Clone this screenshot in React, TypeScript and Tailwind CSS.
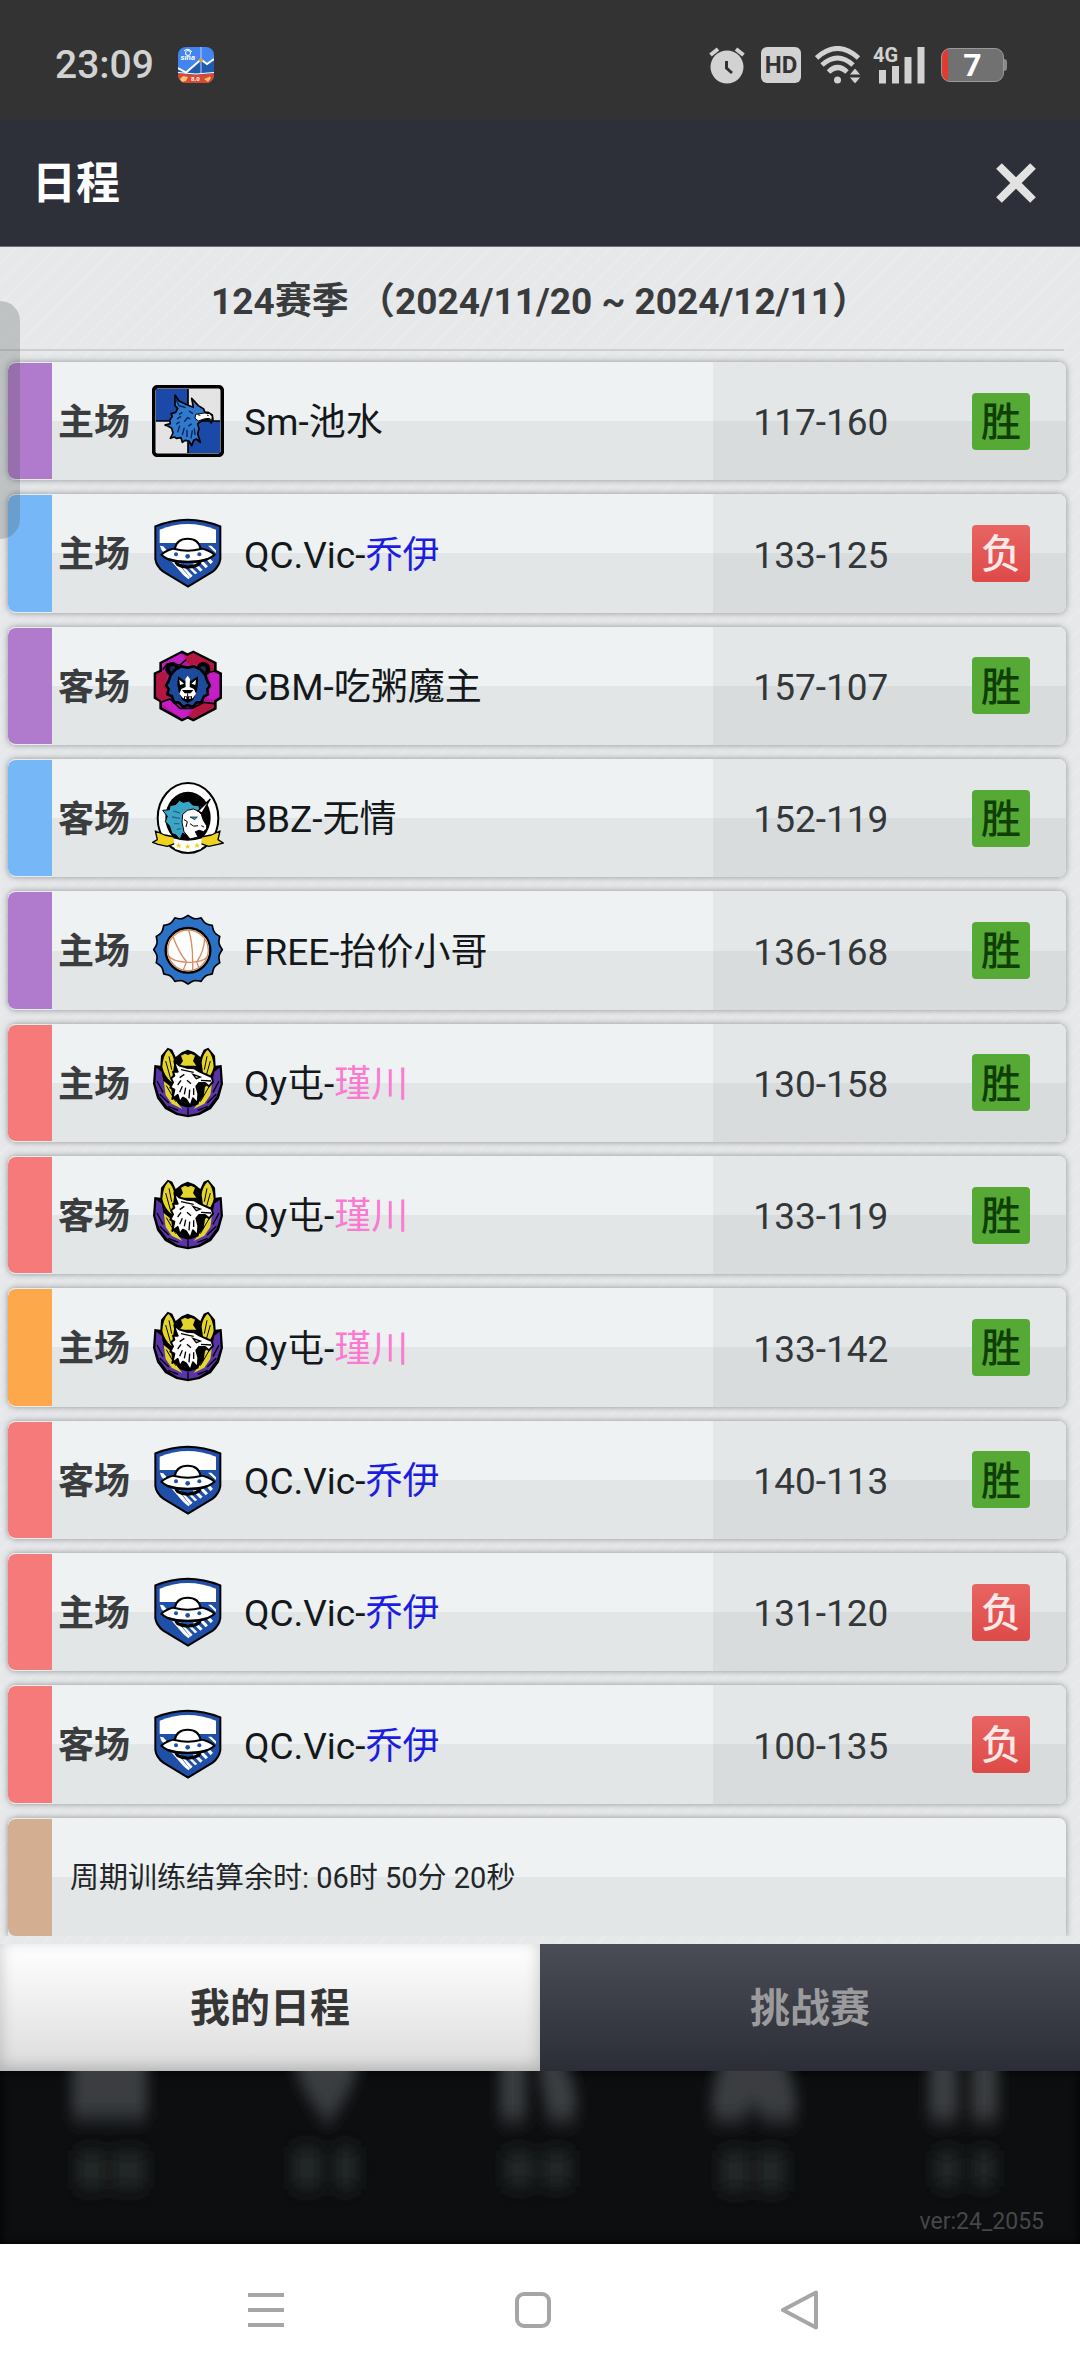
import { useState } from 'react';
import type { ReactNode } from 'react';
import clsx from 'clsx';

type Logo = 'griffin' | 'ufo' | 'bear' | 'unicorn' | 'ball' | 'eagle';
type Strip = 'purple' | 'blue' | 'red' | 'orange';

type Match = {
  strip: Strip;
  place: '主场' | '客场';
  logo: Logo;
  club: string;
  player: string;
  score: string;
  win: boolean;
};

const matches: Match[] = [
  { strip: 'purple', place: '主场', logo: 'griffin', club: 'Sm', player: '池水', score: '117-160', win: true },
  { strip: 'blue', place: '主场', logo: 'ufo', club: 'QC.Vic', player: '乔伊', score: '133-125', win: false },
  { strip: 'purple', place: '客场', logo: 'bear', club: 'CBM', player: '吃粥魔主', score: '157-107', win: true },
  { strip: 'blue', place: '客场', logo: 'unicorn', club: 'BBZ', player: '无情', score: '152-119', win: true },
  { strip: 'purple', place: '主场', logo: 'ball', club: 'FREE', player: '抬价小哥', score: '136-168', win: true },
  { strip: 'red', place: '主场', logo: 'eagle', club: 'Qy屯', player: '瑾川', score: '130-158', win: true },
  { strip: 'red', place: '客场', logo: 'eagle', club: 'Qy屯', player: '瑾川', score: '133-119', win: true },
  { strip: 'orange', place: '主场', logo: 'eagle', club: 'Qy屯', player: '瑾川', score: '133-142', win: true },
  { strip: 'red', place: '客场', logo: 'ufo', club: 'QC.Vic', player: '乔伊', score: '140-113', win: true },
  { strip: 'red', place: '主场', logo: 'ufo', club: 'QC.Vic', player: '乔伊', score: '131-120', win: false },
  { strip: 'red', place: '客场', logo: 'ufo', club: 'QC.Vic', player: '乔伊', score: '100-135', win: false },
];

const stripColors: Record<Strip, string> = {
  purple: 'bg-[#b07acd]',
  blue: 'bg-[#76b8f7]',
  red: 'bg-[#f67a7a]',
  orange: 'bg-[#fda84a]',
};

const playerColors: Record<Logo, string> = {
  griffin: 'text-[#14181b]',
  ufo: 'text-[#1d1de0]',
  bear: 'text-[#14181b]',
  unicorn: 'text-[#14181b]',
  ball: 'text-[#14181b]',
  eagle: 'text-[#fb7bd0]',
};

/* ---------- Club logos ---------- */

function GriffinLogo() {
  return (
    <svg viewBox="21 30 216 216" className="size-[72px]">
      <rect x="27" y="36" width="204" height="204" rx="12" fill="#e4e4e4" />
      <path d="M33 42H129V138H33zM129 138H225V234H129z" fill="#1a49a8" />
      <path d="M129 42V138M33 138H225M129 138V234" stroke="#000" strokeWidth="5" />
      <path
        d="M90 60 102 78 122 88 145 97 140 70 160 92 176 102 180 112 190 112 202 120 204 134 198 144 194 136 182 134 170 138 158 146 162 162 158 176 166 202 154 192 146 196 140 212 132 198 120 196 112 202 108 188 94 190 88 186 76 190 84 174 80 160 70 154 60 150 76 146 74 136 82 124 78 116 92 112 98 100 90 92z"
        fill="#2f79cf"
        stroke="#000"
        strokeWidth="5"
        strokeLinejoin="round"
      />
      <path d="M152 118 178 114 194 116 201 124 201 136 192 130 176 132 160 138 150 130z" fill="#fff" stroke="#000" strokeWidth="3" />
      <path d="M158 119 166 121M186 120 191 122" stroke="#000" strokeWidth="3" />
      <path
        d="M92 70 102 92 122 98M102 118 112 112M96 132 108 124M94 148 104 140 M98 172 104 152 M112 180 118 158M126 186V164 M138 190 142 166M150 180 148 160M118 140 128 128 136 132M132 108 144 116M130 154 140 146"
        stroke="#0c1f4a"
        strokeWidth="4"
        fill="none"
      />
      <rect x="26" y="35" width="206" height="206" rx="12" fill="none" stroke="#000" strokeWidth="11" />
    </svg>
  );
}

function UfoLogo() {
  return (
    <svg viewBox="36 52 216 216" className="size-[72px]">
      <path d="M46 80Q95 60 143 60T241 80V178Q238 200 218 216L144 261 70 216Q49 200 46 178z" fill="#1f4fa6" stroke="#000" strokeWidth="6" />
      <path d="M59 90Q100 73 143 73T228 90V130H59z" fill="#fff" />
      <path
        d="M60 138 70 140 150 234 145 239 130 226 64 150zM114 188 123 192 158 228 151 234zM138 196 147 196 172 220 165 224zM158 192 167 190 188 210 181 216zM176 184 185 180 204 200 197 206zM196 176 205 172 219 186 212 194zM204 138 214 138 228 152V160z"
        fill="#fff"
      />
      <path d="M106 188Q143 212 182 188L176 196Q143 212 112 196z" fill="#d8d8d8" stroke="#000" strokeWidth="6" />
      <path d="M64 165Q80 150 108 146H178Q206 150 224 165 206 180 178 186H108Q80 180 64 165z" fill="#fff" stroke="#000" strokeWidth="6" strokeLinejoin="round" />
      <path d="M104 148Q110 117 143 117T182 148Q143 158 104 148z" fill="#fff" stroke="#000" strokeWidth="6" />
      <path d="M84 178Q143 196 204 178" stroke="#000" strokeWidth="6" fill="none" />
      <g fill="#1f4fa6">
        <circle cx="108" cy="164" r="6" />
        <circle cx="143" cy="170" r="7" />
        <circle cx="178" cy="164" r="6" />
      </g>
    </svg>
  );
}

function BearLogo() {
  return (
    <svg viewBox="66 89 216 216" className="size-[72px]">
      <path d="M156 95 173 103 190 95 256 128V152L272 160V232L256 242V264L190 299 173 291 156 299 92 264V242L75 232V160L92 152V128z" fill="#b5179e" stroke="#000" strokeWidth="8" />
      <path d="M173 106 190 98 252 130V152L226 160 214 130 180 134 162 118z" fill="#b3173f" />
      <path d="M95 154 112 160 108 200 118 232 96 244 79 230V162z" fill="#b3173f" />
      <path d="M222 246 252 250V262L190 295 176 288 190 270 186 260z" fill="#b3173f" />
      <path d="M95 130 154 99 168 118 150 134 112 128 98 148z" fill="#c41fc4" />
      <path d="M238 158 268 162V230L250 240 232 232 240 200z" fill="#c41fc4" />
      <path d="M95 250 120 238 150 262 184 266 170 290 156 295z" fill="#c41fc4" />
      <path d="M98 148 112 130 150 134 168 118M252 152 232 158M96 244 120 236 150 264 186 264 222 246 252 250" stroke="#000" strokeWidth="5" fill="none" />
      <circle cx="127" cy="146" r="21" fill="#000" />
      <circle cx="220" cy="146" r="21" fill="#000" />
      <circle cx="128" cy="146" r="9" fill="#1d2a55" />
      <circle cx="219" cy="146" r="9" fill="#1d2a55" />
      <path
        d="M136 148 154 138 173 142 192 138 212 148 226 164 232 182 240 196 232 206 234 222 222 228 214 246 200 246 188 260 173 254 160 260 146 246 132 246 126 228 112 222 116 206 108 196 116 182 122 164z"
        fill="#1c4a9c"
        stroke="#000"
        strokeWidth="8"
        strokeLinejoin="round"
      />
      <path d="M144 168 164 182 173 172 182 182 204 168 204 192 200 214 190 238 173 248 156 238 146 214 142 192z" fill="#000" />
      <path d="M166 176 173 166 180 176 179 200 192 206 198 220 188 234H159L148 220 154 206 167 200z" fill="#fff" />
      <path d="M148 178 162 190 150 194zM198 178 184 190 196 194z" fill="#fff" />
      <path d="M156 209H190L182 219H164zM162 228H186V236L173 243 162 236z" fill="#000" />
      <path d="M173 219V228" stroke="#000" strokeWidth="3" />
      <path d="M167 229V236M180 229V236" stroke="#fff" strokeWidth="4" />
    </svg>
  );
}

function UnicornLogo() {
  return (
    <svg viewBox="66 487 216 216" className="size-[72px]">
      <ellipse cx="174" cy="595" rx="91" ry="105" fill="#fff" stroke="#000" strokeWidth="6" />
      <ellipse cx="174" cy="594" rx="68" ry="78" fill="#000" />
      <path
        d="M98 572 118 570 120 558 138 554 148 542 160 548 176 544 188 556 206 558 212 574 204 584 190 582 176 600 166 612 164 630 174 650 158 640 150 660 138 646 126 642 118 618 106 606 112 590z"
        fill="#3aa5c4"
        stroke="#000"
        strokeWidth="3"
      />
      <path d="M158 584 172 572 190 568 204 574 214 584 220 602 230 618 230 628 220 636 208 632 196 636 204 652 180 658 162 636 156 608z" fill="#fff" stroke="#000" strokeWidth="3" />
      <path d="M204 574 241 538 216 580z" fill="#fff" stroke="#000" strokeWidth="4" />
      <path d="M180 592 202 592 194 600z" fill="#3aa5c4" stroke="#000" strokeWidth="2" />
      <path d="M162 600 172 606 168 622M214 618 222 622M180 612Q190 624 204 618" stroke="#000" strokeWidth="3" fill="none" />
      <path d="M130 574 150 580M126 592 150 596M132 612 148 612M140 630 152 626" stroke="#1b6f8c" strokeWidth="4" />
      <path d="M68 668 82 660 76 634 104 646 134 652V672L112 680 84 674z" fill="#eed21f" stroke="#000" strokeWidth="4" strokeLinejoin="round" />
      <path d="M280 670 264 660 270 634 244 646 212 652V672L236 680 264 674z" fill="#eed21f" stroke="#000" strokeWidth="4" strokeLinejoin="round" />
      <path d="M130 654Q173 668 216 654L213 688Q173 700 135 688z" fill="#fff" />
      <path d="M130 654Q173 668 216 654" stroke="#000" strokeWidth="4" fill="none" />
      <g fill="#eed21f">
        <path d="M146 669 149 675H155L150 679 152 685 146 681 140 685 142 679 137 675H143z" />
        <path d="M173 672 176 678H182L177 682 179 688 173 684 167 688 169 682 164 678H170z" />
        <path d="M201 669 204 675H210L205 679 207 685 201 681 195 685 197 679 192 675H198z" />
      </g>
    </svg>
  );
}

// Wavy cog outline around the basketball
const cogPath =
  Array.from({ length: 128 }, (_, i) => {
    const angle = (i / 128) * Math.PI * 2;
    const tip = 1 - Math.abs(Math.sin(angle * 8));
    const r = 95 + 8 * tip;
    return `${i === 0 ? 'M' : 'L'}${(174 + r * Math.cos(angle)).toFixed(1)} ${(211 + r * Math.sin(angle)).toFixed(1)}`;
  }).join('') + 'Z';

function BallLogo() {
  return (
    <svg viewBox="66 104 216 216" className="size-[72px]">
      <path d={cogPath} fill="#2b72c6" stroke="#000" strokeWidth="5" strokeLinejoin="round" />
      <circle cx="174" cy="213" r="67" fill="#fff" stroke="#000" strokeWidth="7" />
      <g fill="none" stroke="#d98b62" strokeWidth="4">
        <circle cx="174" cy="213" r="61" />
        <path d="M176 152Q188 190 188 246V273M130 174Q144 216 170 248M224 178Q222 216 200 248M116 230Q130 248 174 249T232 232M168 250 160 272M200 248 206 264" />
      </g>
    </svg>
  );
}

function EagleLogo() {
  return (
    <svg viewBox="21 36 216 216" className="size-[72px]">
      <path d="M28 90 46 92 48 62 68 38 82 44 92 66 110 52 128 44 148 52 166 66 176 44 190 38 210 62 212 92 230 90 234 146 222 190 198 222 164 240 129 247 94 240 60 222 36 190 24 146z" fill="#000" />
      {/* Purple laurel */}
      <path d="M34 98 50 110 58 152 76 186 102 210 129 218 156 210 182 186 200 152 208 110 224 98 227 146 215 184 192 214 160 234 129 240 98 234 66 214 43 184 31 146z" fill="#5a35a8" />
      <path d="M36 138 54 172M44 178 72 204M70 214 100 226M222 138 204 172M214 178 186 204M188 214 158 226M129 240V220" stroke="#000" strokeWidth="4" fill="none" />
      {/* Gold leaves */}
      <path d="M70 44Q86 58 88 84L80 142Q58 124 52 96 54 60 70 44zM188 44Q172 58 170 84L178 142Q200 124 206 96 204 60 188 44z" fill="#e4d52c" />
      <path d="M56 138 78 156 82 184 112 222 80 206 62 180zM202 138 180 156 176 184 146 222 178 206 196 180z" fill="#e4d52c" />
      <path d="M108 62 120 56 129 60 138 56 150 62 144 78 154 92H104L114 78z" fill="#e4d52c" />
      <path d="M62 78 76 128M72 64 80 104M196 78 182 128M186 64 178 104M64 152 92 200M194 152 166 200" stroke="#000" strokeWidth="3" fill="none" />
      {/* Eagle head */}
      <path
        d="M88 78 104 92 124 98 148 100 164 110 182 118 200 126 204 140 192 154 180 144 162 144 154 154 160 176 158 206 144 190 136 214 124 194 114 188 104 202 98 180 82 192 88 164 76 158 84 142 78 130 88 122 84 110 98 110 92 96z"
        fill="#fff"
        stroke="#000"
        strokeWidth="6"
        strokeLinejoin="round"
      />
      <path
        d="M144 118 166 126 154 131zM168 136 198 138M104 128 118 118M98 150 108 136M104 172 112 154M118 178 122 158M132 190 134 164M146 180 146 160M108 104 146 112M126 136 138 146"
        stroke="#000"
        strokeWidth="4"
        fill="none"
      />
    </svg>
  );
}

const logos: Record<Logo, ReactNode> = {
  griffin: <GriffinLogo />,
  ufo: <UfoLogo />,
  bear: <BearLogo />,
  unicorn: <UnicornLogo />,
  ball: <BallLogo />,
  eagle: <EagleLogo />,
};

/* ---------- Status bar ---------- */

function StatusBar() {
  return (
    <div className="flex h-[120px] items-center bg-[#333333] pr-[73px] pl-[55px] pt-2.5 text-[#d2d2d2]">
      <span className="text-[39px] font-medium">23:09</span>

      <svg viewBox="0 0 36 36" className="ml-6 size-9">
        <defs>
          <clipPath id="app-shape">
            <rect width="36" height="36" rx="8" />
          </clipPath>
        </defs>
        <g clipPath="url(#app-shape)">
          <rect width="36" height="36" fill="#4285f0" />
          <path d="M0 22 8 26 22 13 29 18 36 13V36H0z" fill="#1f5cae" />
          <path d="M23 0V26" stroke="#b9cff0" strokeWidth="1" />
          <path d="M0 21 8 25.500 23 12.500 29 17 36 12" stroke="#fff" strokeWidth="2" fill="none" />
          <path d="M0 26Q18 29 36 26V36H0z" fill="#d9482f" />
          <path d="M0 25.500Q18 28.500 36 25.500" stroke="#fff" strokeWidth="1" fill="none" />
          <circle cx="23" cy="13" r="2" fill="#e39a3a" />
          <circle cx="10" cy="6" r="2.500" fill="none" stroke="#fff" strokeWidth="1" />
          <path d="M6 4Q10 0 14 5" stroke="#fff" strokeWidth="1" fill="none" />
          <text x="2.500" y="13" fontSize="8" fontStyle="italic" fontWeight="700" fill="#fff">sina</text>
          <path d="M2 32 5 29 10 30 8 34 4 35zM26 32 31 30V29L33 31 30 35z" fill="#ffc46b" />
          <text x="13" y="34" fontSize="6" fontWeight="700" fill="#fff">8.0</text>
        </g>
      </svg>

      <div className="ml-auto flex items-center gap-4">
        {/* Alarm */}
        <svg viewBox="0 0 36 37" className="h-[37px] w-9">
          <circle cx="18" cy="20" r="16.500" fill="currentColor" />
          <path d="M1.500 8 9 2M27 2 34.500 8" stroke="currentColor" strokeWidth="4" />
          <path d="M17.500 14V21L23 26" stroke="#333333" strokeWidth="3" fill="none" />
        </svg>
        <span className="flex h-9 w-10 items-center justify-center rounded-md bg-[#d2d2d2] text-2xl font-bold text-[#333333]">HD</span>
        {/* Wi-Fi with traffic arrows */}
        <svg viewBox="0 0 46 38" className="-ml-0.5 h-[38px] w-[46px]">
          <g fill="none" stroke="currentColor" strokeWidth="5">
            <path d="M1.500 12Q22.500 -7 43.500 12" />
            <path d="M7 19Q22.500 5 38 19" />
            <path d="M13.500 26Q22.500 17 32 26" />
          </g>
          <circle cx="22.500" cy="34" r="3.500" fill="currentColor" />
          <path d="M40 22 46 29H34zM40 38 34 31H46z" fill="currentColor" stroke="#333333" strokeWidth="1" />
        </svg>
        {/* Mobile signal */}
        <svg viewBox="0 -8 52 54" className="-ml-1 h-[54px] w-[52px]">
          <text x="0" y="16" fontSize="20" fontWeight="700" fill="currentColor">4G</text>
          <path d="M6 24H13V37.500H6zM19 20H26V37.500H19zM31.500 11H38.500V37.500H31.500zM44.500 1H51.500V37.500H44.500z" fill="currentColor" />
        </svg>
        {/* Battery */}
        <div className="flex items-center">
          <span className="flex h-[34px] w-[63px] items-center justify-center rounded-[9px] border border-[#9a9a9a] bg-[linear-gradient(90deg,#e33a30_6px,#717171_6px)] text-[32px] font-bold text-white">7</span>
          <span className="h-3 w-[3px] rounded-r-sm bg-[#8a8a8a]" />
        </div>
      </div>
    </div>
  );
}

function MatchRow({ match }: { match: Match }) {
  return (
    <li className="flex items-center rounded-lg bg-[linear-gradient(#eef2f3_50%,#e2e6e7_50%)] shadow-[0_0_6px_rgba(70,75,80,0.55)]">
      <span className={clsx('w-11 self-stretch rounded-l-lg border-y border-[#e9edee]', stripColors[match.strip])} />
      <span className="ml-1.5 pt-1 text-4xl font-bold text-[#3a3c3e]">{match.place}</span>
      <span className="mr-5 ml-[22px]">{logos[match.logo]}</span>
      <span className="flex-1 pt-1 text-[37px] text-[#14181b]">
        {match.club}-<span className={playerColors[match.logo]}>{match.player}</span>
      </span>
      <div className="flex w-1/3 items-center justify-between self-stretch rounded-r-lg bg-[linear-gradient(#e3e7e8_50%,#d8dcdd_50%)] pr-9 pl-10">
        <span className="pt-1 text-[37px] text-[#33373a]">{match.score}</span>
        <span
          className={clsx(
            'flex h-[57px] w-[58px] items-center justify-center rounded-sm pt-1 text-[40px] font-medium',
            match.win ? 'bg-[#55a934] text-[#103f06]' : 'bg-linear-to-b from-[#e86462] to-[#dd4a48] text-[#ffe9e8]',
          )}
        >
          {match.win ? '胜' : '负'}
        </span>
      </div>
    </li>
  );
}

/* The game's own menu, dimmed and out of focus behind the dialog */
function DimmedMenu() {
  return (
    <div className="flex h-[173px] flex-col bg-[#0c0e10] shadow-[inset_0_0_10px_#000000]">
      <svg viewBox="0 0 1080 140" preserveAspectRatio="none" className="h-[140px] w-full">
        <defs>
          <filter id="soft" x="-10%" y="-40%" width="120%" height="180%">
            <feGaussianBlur stdDeviation="7 10" />
          </filter>
        </defs>
        <g filter="url(#soft)" fill="#3a3c3f">
          <path d="M72 -30H147V48H72zM286 -30H366L350 20 328 54 304 20zM500 -30H526V50H500zM534 -30H558L576 20V50H548zM724 -30H780L796 24V50H764L753 34 742 50H712V24zM929 -30H958V50H929zM971 -30H998V50H971z" />
        </g>
        <g filter="url(#soft)" fill="#242628">
          <path d="M76 80H106V118H76zM112 80H146V118H112zM292 76H322V118H292zM334 76H358V118H334zM504 80H534V116H504zM542 80H572V116H542zM720 80H750V120H720zM756 80H786V120H756zM934 80H960V116H934zM972 80H996V116H972z" />
        </g>
      </svg>
      <span className="-mt-1 pr-9 text-right text-[23px] leading-[30px] text-[#45474a]">ver:24_2055</span>
    </div>
  );
}

function NavBar() {
  return (
    <nav className="grid h-[132px] grid-cols-3 items-center justify-items-center bg-white pr-[147px] pl-[133px] text-[#a6a6a6]">
      <button type="button" aria-label="菜单">
        <svg viewBox="0 0 40 40" className="size-10" fill="none" stroke="currentColor" strokeWidth="4">
          <path d="M2 5H38M2 20H38M2 35H38" />
        </svg>
      </button>
      <button type="button" aria-label="主页">
        <svg viewBox="0 0 40 40" className="size-10" fill="none" stroke="currentColor" strokeWidth="4">
          <rect x="4" y="4" width="32" height="32" rx="7" />
        </svg>
      </button>
      <button type="button" aria-label="返回">
        <svg viewBox="0 0 40 40" className="size-10" fill="none" stroke="currentColor" strokeWidth="4" strokeLinejoin="round">
          <path d="M36 2.500V37.500L3 20z" />
        </svg>
      </button>
    </nav>
  );
}

export default function App() {
  const [tab, setTab] = useState<'mine' | 'challenge'>('mine');

  const tabClass = (active: boolean) =>
    clsx(
      'flex-1 pt-0.5 text-[40px] font-bold',
      active
        ? 'bg-linear-to-b from-white to-[#dcdcdc] text-[#363636] shadow-[inset_0_-4px_16px_rgba(0,0,0,0.2)]'
        : 'bg-linear-to-b from-[#4a4d56] to-[#2c2e37] text-[#9b9b9d]',
    );

  return (
    <div className="relative flex min-h-screen flex-col bg-[#e6e8ea] font-['Roboto','Noto_Sans_CJK_SC',sans-serif]" lang="zh-CN">
      <StatusBar />

      {/* Dialog header */}
      <header className="flex h-[127px] items-center justify-between border-b border-[#6d7177] bg-[#2d3038] pr-[43px] pl-8">
        <h1 className="pt-0.5 text-[44px] font-bold text-white">日程</h1>
        <button type="button" aria-label="关闭">
          <svg viewBox="0 0 42 42" className="size-[42px]">
            <path d="M4 4 38 38M38 4 4 38" stroke="#e2e2e2" strokeWidth="8" />
          </svg>
        </button>
      </header>

      <main className="flex flex-1 flex-col bg-[repeating-linear-gradient(135deg,#e6e8ea_0px,#e6e8ea_10px,#e9ebed_12px,#e6e8ea_14px)]">
        <h2 className="mr-4 flex h-[104px] items-center justify-center border-b-2 border-[#cdd0d1] pt-2 pl-4 text-[37px] font-bold whitespace-pre text-[#393b3d]">
          124赛季 （2024/11/20 ~ 2024/12/11）
        </h2>

        <ul className="grid flex-1 auto-rows-fr gap-3.5 overflow-hidden pt-[11px] pr-3.5 pl-2">
          {matches.map((match, i) => (
            <MatchRow key={i} match={match} />
          ))}
          <li className="flex items-center rounded-t-lg bg-[linear-gradient(#eef2f3_50%,#e2e6e7_50%)] shadow-[0_0_6px_rgba(70,75,80,0.55)]">
            <span className="w-11 self-stretch rounded-l-lg border-t border-[#e9edee] bg-[#d3ae91]" />
            <span className="ml-[18px] pt-1 text-[29px] text-[#222629]">周期训练结算余时: 06时 50分 20秒</span>
          </li>
        </ul>

        <div className="mt-2 flex h-[127px]" role="tablist">
          <button type="button" role="tab" aria-selected={tab === 'mine'} onClick={() => setTab('mine')} className={tabClass(tab === 'mine')}>
            我的日程
          </button>
          <button type="button" role="tab" aria-selected={tab === 'challenge'} onClick={() => setTab('challenge')} className={tabClass(tab === 'challenge')}>
            挑战赛
          </button>
        </div>
      </main>

      <DimmedMenu />
      <NavBar />

      {/* Edge panel handle that floats over the list */}
      <span className="absolute top-[301px] left-0 h-[238px] w-5 rounded-r-[20px] bg-[#46504b]/25" />
    </div>
  );
}
